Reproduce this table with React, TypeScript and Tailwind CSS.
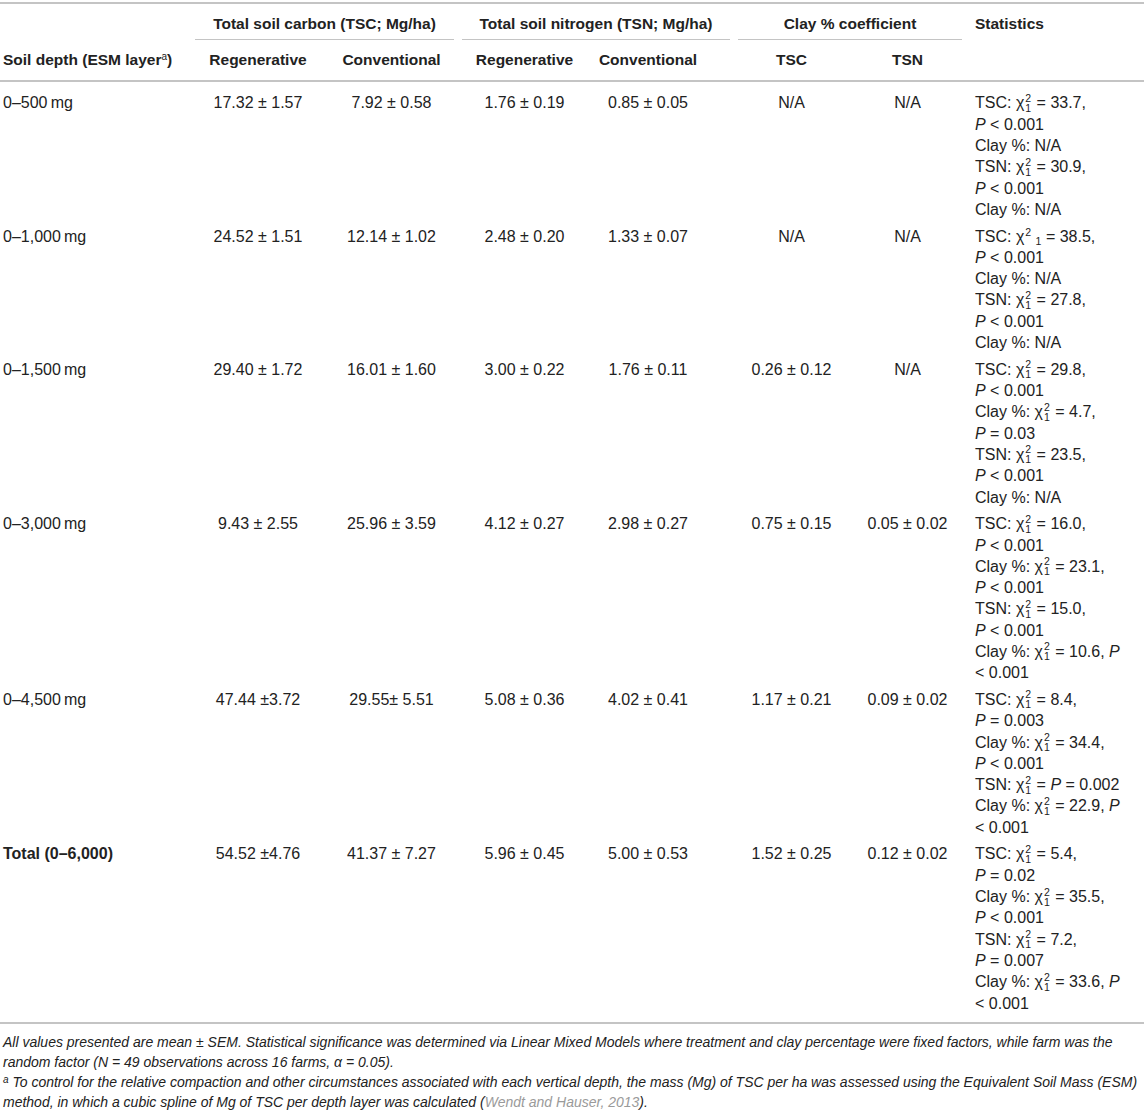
import React from "react";

const Chi = () => (
  <>
    χ
    <span className="inline-flex flex-col align-[6.5px] text-[10.5px] leading-[10px] ml-[1px] mr-[1px]">
      <span>2</span>
      <span>1</span>
    </span>
  </>
);

const ChiSplit = () => (
  <>
    χ<span className="inline-block align-[6px] text-[10.5px] leading-[10px] ml-[1px]">2</span>{" "}
    <span className="inline-block align-[-3px] text-[10.5px] leading-[10px]">1</span>
  </>
);

const P = () => <i>P</i>;

type Row = {
  depth: React.ReactNode;
  bold?: boolean;
  vals: string[];
  stats: React.ReactNode[];
};

const rows: Row[] = [
  {
    depth: "0–500\u2009mg",
    vals: ["17.32 ± 1.57", "7.92 ± 0.58", "1.76 ± 0.19", "0.85 ± 0.05", "N/A", "N/A"],
    stats: [
      <>TSC: <Chi /> = 33.7,</>,
      <><P /> &lt; 0.001</>,
      <>Clay %: N/A</>,
      <>TSN: <Chi /> = 30.9,</>,
      <><P /> &lt; 0.001</>,
      <>Clay %: N/A</>,
    ],
  },
  {
    depth: "0–1,000\u2009mg",
    vals: ["24.52 ± 1.51", "12.14 ± 1.02", "2.48 ± 0.20", "1.33 ± 0.07", "N/A", "N/A"],
    stats: [
      <>TSC: <ChiSplit /> = 38.5,</>,
      <><P /> &lt; 0.001</>,
      <>Clay %: N/A</>,
      <>TSN: <Chi /> = 27.8,</>,
      <><P /> &lt; 0.001</>,
      <>Clay %: N/A</>,
    ],
  },
  {
    depth: "0–1,500\u2009mg",
    vals: ["29.40 ± 1.72", "16.01 ± 1.60", "3.00 ± 0.22", "1.76 ± 0.11", "0.26 ± 0.12", "N/A"],
    stats: [
      <>TSC: <Chi /> = 29.8,</>,
      <><P /> &lt; 0.001</>,
      <>Clay %: <Chi /> = 4.7,</>,
      <><P /> = 0.03</>,
      <>TSN: <Chi /> = 23.5,</>,
      <><P /> &lt; 0.001</>,
      <>Clay %: N/A</>,
    ],
  },
  {
    depth: "0–3,000\u2009mg",
    vals: ["9.43 ± 2.55", "25.96 ± 3.59", "4.12 ± 0.27", "2.98 ± 0.27", "0.75 ± 0.15", "0.05 ± 0.02"],
    stats: [
      <>TSC: <Chi /> = 16.0,</>,
      <><P /> &lt; 0.001</>,
      <>Clay %: <Chi /> = 23.1,</>,
      <><P /> &lt; 0.001</>,
      <>TSN: <Chi /> = 15.0,</>,
      <><P /> &lt; 0.001</>,
      <>Clay %: <Chi /> = 10.6, <P /></>,
      <>&lt; 0.001</>,
    ],
  },
  {
    depth: "0–4,500\u2009mg",
    vals: ["47.44 ±3.72", "29.55± 5.51", "5.08 ± 0.36", "4.02 ± 0.41", "1.17 ± 0.21", "0.09 ± 0.02"],
    stats: [
      <>TSC: <Chi /> = 8.4,</>,
      <><P /> = 0.003</>,
      <>Clay %: <Chi /> = 34.4,</>,
      <><P /> &lt; 0.001</>,
      <>TSN: <Chi /> = <P /> = 0.002</>,
      <>Clay %: <Chi /> = 22.9, <P /></>,
      <>&lt; 0.001</>,
    ],
  },
  {
    depth: "Total (0–6,000)",
    bold: true,
    vals: ["54.52 ±4.76", "41.37 ± 7.27", "5.96 ± 0.45", "5.00 ± 0.53", "1.52 ± 0.25", "0.12 ± 0.02"],
    stats: [
      <>TSC: <Chi /> = 5.4,</>,
      <><P /> = 0.02</>,
      <>Clay %: <Chi /> = 35.5,</>,
      <><P /> &lt; 0.001</>,
      <>TSN: <Chi /> = 7.2,</>,
      <><P /> = 0.007</>,
      <>Clay %: <Chi /> = 33.6, <P /></>,
      <>&lt; 0.001</>,
    ],
  },
];

export default function App() {
  return (
    <div className="w-[1144px] bg-white text-[#222] font-['Liberation_Sans',Arial,sans-serif] text-[16px]">
      <div className="mt-[2px] border-t-2 border-[#c4c4c4]" />
      {/* header */}
      <div className="flex border-b-2 border-[#c4c4c4] leading-[21px] font-bold">
        <div className="w-[191px] shrink-0 flex items-end pl-[3px] pb-[10px] text-[15.5px]">
          <span>
            Soil depth (ESM layer<span className="inline-block text-[10px] leading-[10px] font-normal align-[5px]">a</span>)
          </span>
        </div>
        <div className="w-[267px] shrink-0 flex flex-col text-[15.5px]">
          <div className="pt-[9px] text-center">Total soil carbon (TSC; Mg/ha)</div>
          <div className="mx-[4px] mt-[5px] h-px bg-[#c4c4c4]" />
          <div className="flex pt-[9px] pb-[10px]">
            <div className="w-[134px] text-center">Regenerative</div>
            <div className="w-[133px] text-center">Conventional</div>
          </div>
        </div>
        <div className="w-[276px] shrink-0 flex flex-col text-[15.5px]">
          <div className="pt-[9px] text-center">Total soil nitrogen (TSN; Mg/ha)</div>
          <div className="mx-[4px] mt-[5px] h-px bg-[#c4c4c4]" />
          <div className="flex pt-[9px] pb-[10px]">
            <div className="w-[133px] text-center">Regenerative</div>
            <div className="w-[143px] pr-[29px] text-center">Conventional</div>
          </div>
        </div>
        <div className="w-[232px] shrink-0 flex flex-col text-[15.5px]">
          <div className="pt-[9px] text-center">Clay % coefficient</div>
          <div className="mx-[4px] mt-[5px] h-px bg-[#c4c4c4]" />
          <div className="flex pt-[9px] pb-[10px]">
            <div className="w-[115px] text-center">TSC</div>
            <div className="w-[117px] text-center">TSN</div>
          </div>
        </div>
        <div className="flex-1 pl-[9px] pt-[9px] text-[15.5px]">Statistics</div>
      </div>
      {/* body */}
      <div className="pt-[10.4px] pb-[2.6px] border-b-2 border-[#c4c4c4] leading-[21.3px]">
        {rows.map((r, i) => (
          <div key={i} className="flex pb-[5.4px]">
            <div className={`w-[191px] shrink-0 pl-[3px] ${r.bold ? "font-bold" : ""}`}>{r.depth}</div>
            <div className="w-[134px] shrink-0 text-center">{r.vals[0]}</div>
            <div className="w-[133px] shrink-0 text-center">{r.vals[1]}</div>
            <div className="w-[133px] shrink-0 text-center">{r.vals[2]}</div>
            <div className="w-[143px] shrink-0 pr-[29px] text-center">{r.vals[3]}</div>
            <div className="w-[115px] shrink-0 text-center">{r.vals[4]}</div>
            <div className="w-[117px] shrink-0 text-center">{r.vals[5]}</div>
            <div className="flex-1 pl-[9px]">
              {r.stats.map((s, j) => (
                <div key={j} className="whitespace-nowrap">
                  {s}
                </div>
              ))}
            </div>
          </div>
        ))}
      </div>
      {/* footnotes */}
      <div className="pt-[8px] pl-[3px] italic text-[14px] leading-[20px]">
        <div className="whitespace-nowrap">
          All values presented are mean ± SEM. Statistical significance was determined via Linear Mixed Models where
          treatment and clay percentage were fixed factors, while farm was the
        </div>
        <div className="whitespace-nowrap">random factor (N = 49 observations across 16 farms, α = 0.05).</div>
        <div className="whitespace-nowrap">
          <span className="inline-block text-[10px] leading-[10px] align-[4px]">a</span> To control for the relative
          compaction and other circumstances associated with each vertical depth, the mass (Mg) of TSC per ha was
          assessed using the Equivalent Soil Mass (ESM)
        </div>
        <div className="whitespace-nowrap">
          method, in which a cubic spline of Mg of TSC per depth layer was calculated (
          <span className="text-[#9a9a9a]">Wendt and Hauser, 2013</span>).
        </div>
      </div>
    </div>
  );
}
